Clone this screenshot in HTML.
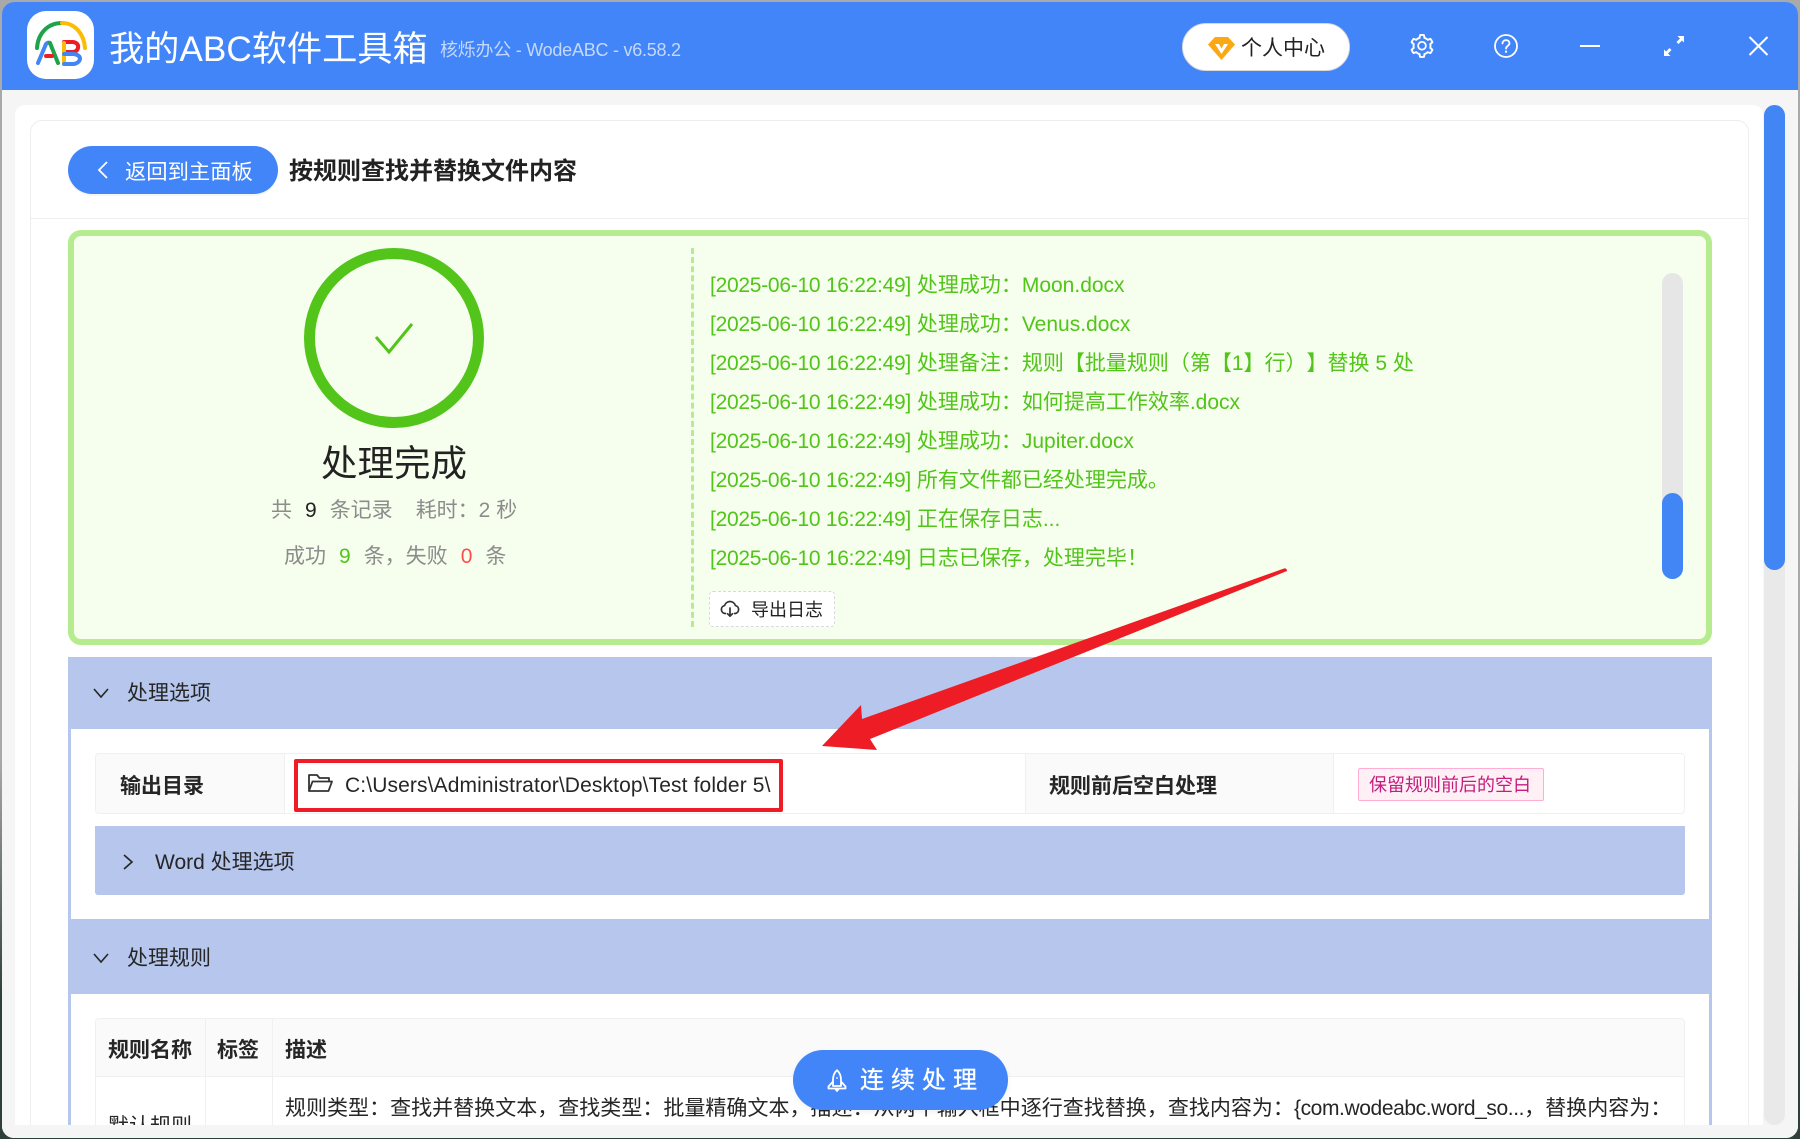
<!DOCTYPE html>
<html lang="zh-CN">
<head>
<meta charset="utf-8">
<title>我的ABC软件工具箱</title>
<style>
*{box-sizing:border-box;margin:0;padding:0}
html,body{width:1800px;height:1139px;overflow:hidden}
body{position:relative;background:linear-gradient(#a9a9a9 0,#a9a9a9 760px,#2f3f39 1000px,#2f3f39 100%);font-family:"Liberation Sans","Noto Sans CJK SC",sans-serif;color:#262626;text-spacing-trim:space-all}
.a{position:absolute}
.t{position:absolute;white-space:nowrap;line-height:30px;height:30px}
#win{position:absolute;left:2px;top:2px;width:1796px;height:1136px;border-radius:12px;overflow:hidden;background:#f5f5f5}
.abs{position:absolute}
.sec{position:absolute;background:#b6c6ed}
.log{position:absolute;left:710px;white-space:nowrap;color:#52c41a;font-size:21px;line-height:30px;height:30px}
.log span{letter-spacing:-.27px}
.b{font-weight:700}
svg{position:absolute;overflow:visible}
</style>
</head>
<body>
<div id="win"></div>

<!-- header -->
<div class="a" style="left:2px;top:2px;width:1796px;height:88px;background:#4285f9;border-radius:12px 12px 0 0"></div>
<div class="a" style="left:27px;top:11px;width:67px;height:68px;background:#fff;border-radius:19px"></div>
<svg style="left:27px;top:11px" width="67" height="68" viewBox="27 11 67 68" fill="none" stroke-width="4" stroke-linecap="round">
<path d="M37 48C38 33 48 23 62 23" stroke="#1ea24a"/>
<path d="M62 23C75 23 84 34 85 48" stroke="#fbbc05"/>
<path d="M38 63L46 44Q48 42 50 43" stroke="#4285f4"/>
<path d="M50 43L58 63" stroke="#1ea24a"/>
<path d="M46 56H52" stroke="#ee1c25"/>
<path d="M64 42H73Q79 43 78 48Q77 52 72 52H64" stroke="#ee1c25"/>
<path d="M64 43V63" stroke="#fbbc05"/>
<path d="M64 54H74Q80 55 80 59Q79 63 74 64H64" stroke="#4285f4"/>
</svg>
<div class="t" style="left:109px;top:25px;font-size:35.2px;line-height:50px;height:50px;color:#fff">我的ABC软件工具箱</div>
<div class="t" style="left:440px;top:35px;font-size:18px;color:#c4d8fc;letter-spacing:-.25px">核烁办公 - WodeABC - v6.58.2</div>

<div class="a" style="left:1182px;top:23px;width:168px;height:48px;background:#fff;border:1px solid #d9d9d9;border-radius:24px"></div>
<svg style="left:1208px;top:37px" width="27" height="23" viewBox="0 0 27 23">
<path d="M7 0H20L27 7.5L13.5 23L0 7.5Z" fill="#faa814"/>
<path d="M7 7H11L13.5 11.5L16 7H20L13.5 17Z" fill="#fff"/>
</svg>
<div class="t" style="left:1241px;top:34px;font-size:21px;color:#222">个人中心</div>

<svg style="left:1410px;top:34px" width="24" height="24" viewBox="64 64 896 896" fill="#fff"><path d="M924.8 625.7l-65.5-56c3.1-19 4.7-38.4 4.7-57.8s-1.6-38.8-4.7-57.8l65.5-56a32.03 32.03 0 0 0 9.3-35.2l-.9-2.6a443.74 443.74 0 0 0-79.7-137.9l-1.8-2.1a32.12 32.12 0 0 0-35.1-9.5l-81.3 28.9c-30-24.6-63.5-44-99.7-57.6l-15.7-85a32.05 32.05 0 0 0-25.8-25.7l-2.7-.5c-52.1-9.4-106.9-9.4-159 0l-2.7.5a32.05 32.05 0 0 0-25.8 25.7l-15.8 85.4a351.86 351.86 0 0 0-99 57.4l-81.9-29.1a32 32 0 0 0-35.1 9.5l-1.8 2.1a446.02 446.02 0 0 0-79.7 137.9l-.9 2.6c-4.5 12.5-.8 26.5 9.3 35.2l66.3 56.6c-3.1 18.8-4.6 38-4.6 57.1 0 19.2 1.5 38.4 4.6 57.1L99 625.5a32.03 32.03 0 0 0-9.3 35.2l.9 2.6c18.1 50.4 44.9 96.9 79.7 137.9l1.8 2.1a32.12 32.12 0 0 0 35.1 9.5l81.9-29.1c29.8 24.5 63.1 43.9 99 57.4l15.8 85.4a32.05 32.05 0 0 0 25.8 25.7l2.7.5a449.4 449.4 0 0 0 159 0l2.7-.5a32.05 32.05 0 0 0 25.8-25.7l15.7-85a350 350 0 0 0 99.7-57.6l81.3 28.9a32 32 0 0 0 35.1-9.5l1.8-2.1c34.8-41.1 61.6-87.5 79.7-137.9l.9-2.6c4.5-12.3.8-26.3-9.3-35zM788.3 465.9c2.5 15.1 3.8 30.6 3.8 46.1s-1.3 31-3.8 46.1l-6.6 40.1 74.7 63.9a370.03 370.03 0 0 1-42.6 73.6L721 702.8l-31.4 25.8c-23.9 19.6-50.5 35-79.3 45.8l-38.1 14.3-17.9 97a377.5 377.5 0 0 1-85 0l-17.9-97.2-37.8-14.5c-28.5-10.8-55-26.2-78.7-45.7l-31.4-25.9-93.4 33.2c-17-22.9-31.2-47.6-42.6-73.6l75.5-64.5-6.5-40c-2.4-14.9-3.7-30.3-3.7-45.5 0-15.3 1.2-30.6 3.7-45.5l6.5-40-75.5-64.5c11.3-26.1 25.6-50.7 42.6-73.6l93.4 33.2 31.4-25.9c23.7-19.5 50.2-34.9 78.7-45.7l37.9-14.3 17.9-97.2c28.1-3.2 56.8-3.2 85 0l17.9 97 38.1 14.3c28.7 10.8 55.4 26.2 79.3 45.8l31.4 25.8 92.8-32.9c17 22.9 31.2 47.6 42.6 73.6L781.8 426l6.5 39.9zM512 326c-97.2 0-176 78.8-176 176s78.8 176 176 176 176-78.8 176-176-78.8-176-176-176zm79.2 255.2A111.6 111.6 0 0 1 512 614c-29.9 0-58-11.7-79.2-32.8A111.6 111.6 0 0 1 400 502c0-29.9 11.7-58 32.8-79.2C454 401.6 482.1 390 512 390c29.9 0 58 11.6 79.2 32.8A111.6 111.6 0 0 1 624 502c0 29.9-11.7 58-32.8 79.2z"/></svg>
<svg style="left:1494px;top:34px" width="24" height="24" viewBox="0 0 24 24" fill="none" stroke="#fff" stroke-width="1.8" stroke-linecap="round">
<circle cx="12" cy="12" r="11"/><path d="M8.5 9.5C8.5 7.5 10 6.2 12 6.2S15.5 7.5 15.5 9.3C15.5 11.8 12 12 12 14.6"/><path d="M12 17.6V17.8" stroke-width="2.2"/>
</svg>
<div class="a" style="left:1580px;top:45px;width:20px;height:2px;background:#fff"></div>
<svg style="left:1664px;top:36px" width="20" height="20" viewBox="0 0 20 20" fill="#fff">
<path d="M13.5 0H20V6.5L18 4.5L14.5 8L12.5 6L16 2.5Z"/><path d="M6.5 20H0V13.5L2 15.5L5.5 12L7.5 14L4 17.5Z"/>
</svg>
<svg style="left:1749px;top:37px" width="19" height="18" viewBox="0 0 19 18" stroke="#fff" stroke-width="2" fill="none"><path d="M.5 0L18.5 18M18.5 0L.5 18"/></svg>

<!-- cards -->
<div class="a" style="left:15px;top:105px;width:1748px;height:1020px;background:#fff;border-radius:10px 10px 0 0"></div>
<div class="a" style="left:30px;top:120px;width:1719px;height:1005px;background:#fff;border:1px solid #eee;border-bottom:0;border-radius:12px 12px 0 0"></div>
<div class="a" style="left:31px;top:218px;width:1717px;height:1px;background:#eee"></div>

<div class="a" style="left:68px;top:146px;width:210px;height:48px;background:#4285f9;border-radius:24px;box-shadow:0 2px 0 rgba(0,0,0,.04)"></div>
<svg style="left:96px;top:161px" width="14" height="18" viewBox="0 0 14 18" fill="none" stroke="#fff" stroke-width="1.8"><path d="M11 1L3 9L11 17"/></svg>
<div class="t" style="left:125px;top:157px;font-size:21.3px;color:#fff">返回到主面板</div>
<div class="t b" style="left:289px;top:157px;font-size:24px;color:#222">按规则查找并替换文件内容</div>

<!-- result panel -->
<div class="a" style="left:68px;top:230px;width:1644px;height:415px;background:#f6ffed;border:6px solid #b7eb8f;border-radius:13px"></div>
<div class="a" style="left:304px;top:248px;width:180px;height:180px;border:11px solid #52c41a;border-radius:50%"></div>
<svg style="left:375px;top:323px" width="38" height="31" viewBox="0 0 38 31" fill="none" stroke="#52c41a" stroke-width="3"><path d="M1 14L14 29L37 1"/></svg>
<div class="t" style="left:321px;top:439px;font-size:36.5px;line-height:50px;height:50px;color:#222">处理完成</div>
<div class="t" style="left:271px;top:496px;font-size:21px;color:#8c8c8c">共<span style="color:#222;margin:0 13px">9</span>条记录<span style="margin-left:23px">耗时：2 秒</span></div>
<div class="t" style="left:284px;top:542px;font-size:21px;color:#8c8c8c">成功<span style="color:#52c41a;margin:0 13px">9</span>条，失败<span style="color:#ff4d4f;margin:0 13px">0</span>条</div>
<div class="a" style="left:691px;top:248px;height:379px;border-left:3px dashed #b7eb8f"></div>

<div class="log" style="top:271px"><span>[2025-06-10 16:22:49]</span> 处理成功：Moon.docx</div>
<div class="log" style="top:310px"><span>[2025-06-10 16:22:49]</span> 处理成功：Venus.docx</div>
<div class="log" style="top:349px"><span>[2025-06-10 16:22:49]</span> 处理备注：规则【批量规则（第【1】行）】替换 5 处</div>
<div class="log" style="top:388px"><span>[2025-06-10 16:22:49]</span> 处理成功：如何提高工作效率.docx</div>
<div class="log" style="top:427px"><span>[2025-06-10 16:22:49]</span> 处理成功：Jupiter.docx</div>
<div class="log" style="top:466px"><span>[2025-06-10 16:22:49]</span> 所有文件都已经处理完成。</div>
<div class="log" style="top:505px"><span>[2025-06-10 16:22:49]</span> 正在保存日志...</div>
<div class="log" style="top:544px"><span>[2025-06-10 16:22:49]</span> 日志已保存，处理完毕！</div>

<div class="a" style="left:1662px;top:273px;width:21px;height:306px;background:#e6e6e6;border-radius:11px"></div>
<div class="a" style="left:1662px;top:493px;width:21px;height:86px;background:#4285f4;border-radius:11px"></div>

<div class="a" style="left:709px;top:591px;width:126px;height:36px;background:#fff;border:1px dashed #d9d9d9;border-radius:4px"></div>
<svg style="left:720px;top:600px" width="20" height="18" viewBox="0 0 20 18" fill="none" stroke="#333" stroke-width="1.7" stroke-linecap="round" stroke-linejoin="round">
<path d="M5.5 13.5H5A4 4 0 0 1 4.6 5.6 5.6 5.6 0 0 1 15.4 5.6 4 4 0 0 1 15 13.5H14.5"/><path d="M10 8V16M7.6 13.8L10 16.2L12.4 13.8"/>
</svg>
<div class="t" style="left:751px;top:595px;font-size:18px;color:#222">导出日志</div>

<!-- section 1 -->
<div class="sec" style="left:68px;top:657px;width:1644px;height:72px"></div>
<div class="a" style="left:68px;top:729px;width:3px;height:190px;background:#b6c6ed"></div>
<div class="a" style="left:1709px;top:729px;width:3px;height:190px;background:#b6c6ed"></div>
<svg style="left:93px;top:687px" width="16" height="12" viewBox="0 0 16 12" fill="none" stroke="#262626" stroke-width="1.6"><path d="M1 2L8 10L15 2"/></svg>
<div class="t" style="left:127px;top:679px;font-size:21px;color:#262626">处理选项</div>

<div class="a" style="left:95px;top:753px;width:1590px;height:61px;border:1px solid #f0f0f0;border-radius:4px;overflow:hidden">
  <div class="abs" style="left:0;top:0;width:189px;height:59px;background:#fafafa;border-right:1px solid #f0f0f0"></div>
  <div class="abs" style="left:929px;top:0;width:309px;height:59px;background:#fafafa;border-left:1px solid #f0f0f0;border-right:1px solid #f0f0f0"></div>
</div>
<div class="t b" style="left:120px;top:772px;font-size:21px;color:#262626">输出目录</div>
<svg style="left:308px;top:774px" width="25" height="18" viewBox="0 0 25 18" fill="none" stroke="#333" stroke-width="1.8" stroke-linejoin="round">
<path d="M1 17V1H9L11.5 4H21V7.5"/><path d="M1 17H20.5L24 7.5H4.5L1 17Z"/>
</svg>
<div class="t" style="left:345px;top:771px;font-size:21px;color:#262626;letter-spacing:.12px">C:\Users\Administrator\Desktop\Test folder 5\</div>
<div class="a" style="left:294px;top:759px;width:489px;height:53px;border:4px solid #ee1c25;border-radius:2px"></div>
<div class="t b" style="left:1049px;top:772px;font-size:21px;color:#262626">规则前后空白处理</div>
<div class="a" style="left:1358px;top:768px;width:186px;height:33px;background:#fff0f6;border:1px solid #ffadd2;border-radius:2px"></div>
<div class="t" style="left:1369px;top:770px;font-size:18px;color:#c41d7f">保留规则前后的空白</div>

<div class="sec" style="left:95px;top:826px;width:1590px;height:69px;border-radius:0 0 3px 3px"></div>
<svg style="left:122px;top:854px" width="12" height="16" viewBox="0 0 12 16" fill="none" stroke="#262626" stroke-width="1.6"><path d="M2 1L10 8L2 15"/></svg>
<div class="t" style="left:155px;top:848px;font-size:21px;color:#262626">Word 处理选项</div>

<!-- section 2 -->
<div class="sec" style="left:68px;top:919px;width:1644px;height:75px"></div>
<div class="a" style="left:68px;top:994px;width:3px;height:131px;background:#b6c6ed"></div>
<div class="a" style="left:1709px;top:994px;width:3px;height:131px;background:#b6c6ed"></div>
<svg style="left:93px;top:952px" width="16" height="12" viewBox="0 0 16 12" fill="none" stroke="#262626" stroke-width="1.6"><path d="M1 2L8 10L15 2"/></svg>
<div class="t" style="left:127px;top:944px;font-size:21px;color:#262626">处理规则</div>

<div class="a" style="left:95px;top:1018px;width:1590px;height:107px;border:1px solid #f0f0f0;border-bottom:0;border-radius:4px 4px 0 0;overflow:hidden">
  <div class="abs" style="left:0;top:0;width:1590px;height:58px;background:#fafafa;border-bottom:1px solid #f0f0f0"></div>
  <div class="abs" style="left:109px;top:0;width:1px;height:107px;background:#f0f0f0"></div>
  <div class="abs" style="left:176px;top:0;width:1px;height:107px;background:#f0f0f0"></div>
</div>
<div class="t b" style="left:108px;top:1036px;font-size:21px;color:#262626">规则名称</div>
<div class="t b" style="left:217px;top:1036px;font-size:21px;color:#262626">标签</div>
<div class="t b" style="left:285px;top:1036px;font-size:21px;color:#262626">描述</div>
<div class="t" style="left:285px;top:1094px;font-size:21px;color:#262626;letter-spacing:.02px">规则类型：查找并替换文本，查找类型：批量精确文本，描述：从两个输入框中逐行查找替换，查找内容为：<span style="letter-spacing:-.4px">{com.wodeabc.word_so...</span><span style="letter-spacing:.05px">，替换内容为：</span></div>
<div class="a" style="left:96px;top:1105px;width:170px;height:20px;overflow:hidden"><div class="t" style="left:12px;top:7px;font-size:21px;color:#262626">默认规则</div></div>

<!-- bottom mask -->
<div class="a" style="left:2px;top:1125px;width:1796px;height:13px;background:#f5f5f5;border-radius:0 0 12px 12px"></div>

<!-- outer scrollbar -->
<div class="a" style="left:1764px;top:105px;width:21px;height:1020px;background:#e9e9e9;border-radius:11px"></div>
<div class="a" style="left:1764px;top:105px;width:21px;height:465px;background:#4285f4;border-radius:11px"></div>

<!-- float button -->
<div class="a" style="left:793px;top:1050px;width:215px;height:60px;background:#4285f9;border-radius:30px;box-shadow:0 2px 6px rgba(0,0,0,.06)"></div>
<svg style="left:827px;top:1069px" width="20" height="23" viewBox="0 0 20 23" fill="none" stroke="#fff" stroke-width="1.8" stroke-linejoin="round">
<path d="M10 1.2C6.8 4 6 7.5 6 11V17H14V11C14 7.5 13.2 4 10 1.2Z"/><path d="M6 12.5L1.5 17.5V19.5H18.5V17.5L14 12.5"/><path d="M8 19.5L10 22L12 19.5"/><circle cx="10" cy="9" r=".9" fill="#fff" stroke="none"/>
</svg>
<div class="t" style="left:860px;top:1066px;font-size:24px;color:#fff;letter-spacing:7px;-webkit-text-stroke:.3px #fff">连续处理</div>

<!-- annotation arrow -->
<svg style="left:0;top:0" width="1800" height="1139" viewBox="0 0 1800 1139">
<path d="M1284 568.5Q1287 568 1287 571L870 739L877 750L822 746L861 705L862 719Z" fill="#ee1c25"/>
</svg>
</body>
</html>
